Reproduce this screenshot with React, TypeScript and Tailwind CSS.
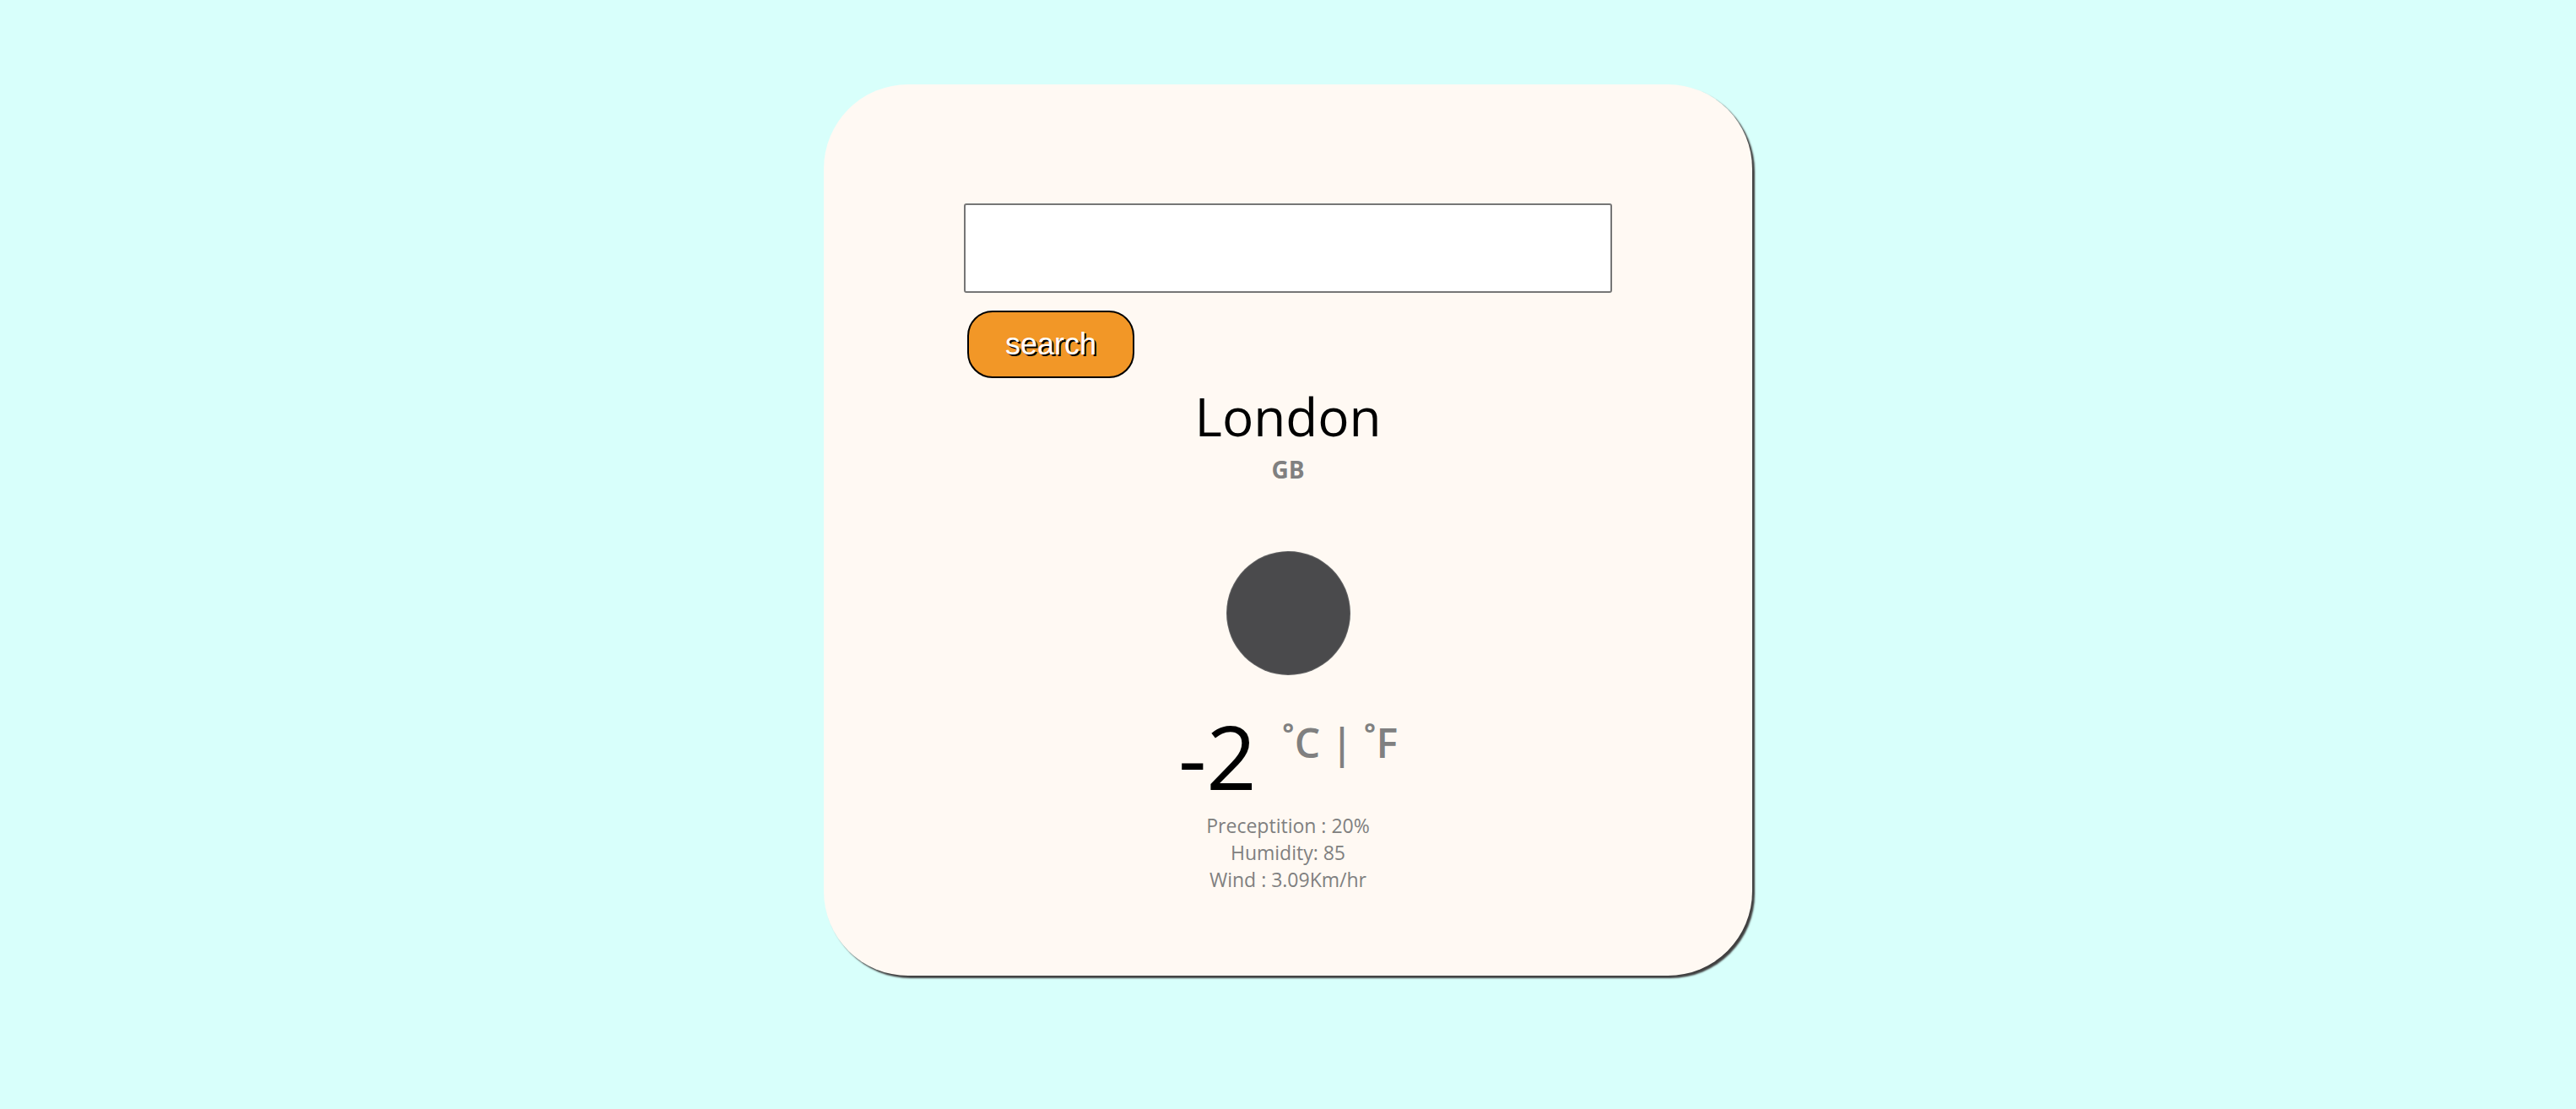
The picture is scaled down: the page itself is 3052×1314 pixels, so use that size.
import React from 'react';

const App: React.FC = () => {
  const details = ['Preceptition : 20%', 'Humidity: 85', 'Wind : 3.09Km/hr'];

  return (
    <div className="w-full h-[1314px] bg-[#d8fffb] pt-[100px] overflow-hidden">
      <div className="mx-auto w-[1100px] h-[1056px] rounded-[100px] bg-[#fff9f3] shadow-[3px_3px_2px_#3f3f3f] flex flex-col items-center pt-[141px] font-['Open_Sans',sans-serif]">
        <div className="w-[768px] flex flex-col items-start">
          <input
            type="text"
            className="w-full h-[106px] bg-white border-2 border-[#767676] rounded-[3px] outline-none"
          />
          <button className="mt-[21px] ml-[4px] w-[198px] h-[80px] rounded-[30px] border-2 border-black bg-[#f29727] text-white text-[36px] font-['Liberation_Sans',Arial,sans-serif] [text-shadow:2px_2px_0_#000] flex items-center justify-center">
            search
          </button>
        </div>

        <h1 className="mt-[14px] text-[62px] leading-none font-medium text-black">London</h1>
        <h3 className="mt-[18px] text-[28px] leading-none font-bold text-[#808080]">GB</h3>

        <div className="mt-[83px] w-[147px] h-[147px] rounded-full bg-[#4a4a4c] border border-[#8a8a8a]/40" />

        <div className="mt-[44px] flex items-start gap-[30px]">
          <span className="text-[104px] leading-none font-medium text-black">-2</span>
          <span className="mt-[12px] text-[48px] leading-none font-semibold text-[#808080]">˚C | ˚F</span>
        </div>

        <div className="mt-[14px] flex flex-col items-center text-[23px] leading-[32px] text-[#808080]">
          {details.map((d) => (
            <span key={d}>{d}</span>
          ))}
        </div>
      </div>
    </div>
  );
};

export default App;
